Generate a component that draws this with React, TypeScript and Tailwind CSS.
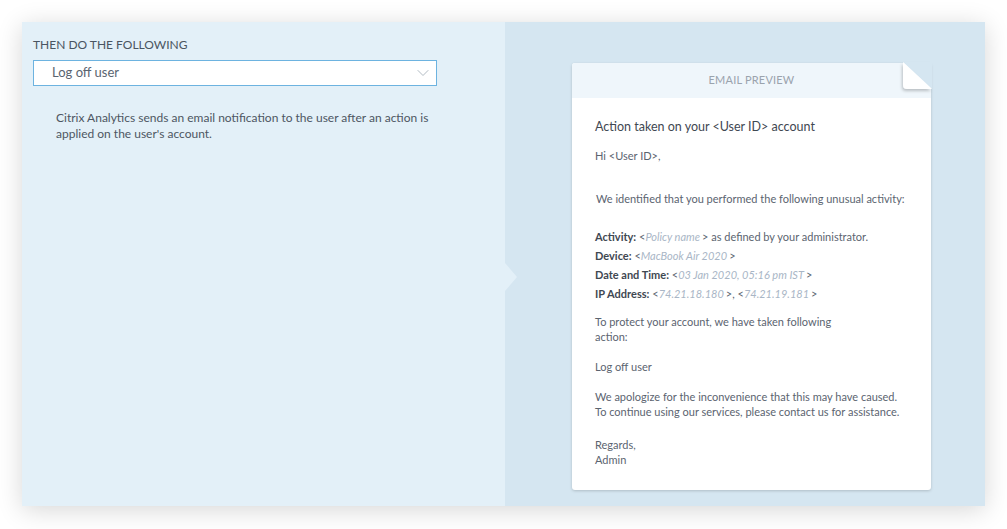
import { ChevronDown } from 'lucide-react'

const font = { fontFamily: 'Lato, "Open Sans", sans-serif' }

function Ph({ children }: { children: string }) {
  return (
    <>
      &lt;<i className="text-[#a9b6c6] pr-[2px]">{children}</i>&gt;
    </>
  )
}

function EmailPreview() {
  return (
    <div className="relative ml-[67px] mt-[41px] w-[359px] h-[427px] bg-white rounded-[3px] shadow-[0_1px_3px_rgba(0,0,0,0.18)]">
      <div className="h-[35px] bg-[#eff6fb] rounded-t-[3px] flex items-center justify-center text-[11px] text-[#9aa3ad] tracking-[0.2px]">
        EMAIL PREVIEW
      </div>

      {/* folded corner */}
      <svg className="absolute -top-px -right-px overflow-visible" width="29" height="27" viewBox="0 0 29 27">
        <defs>
          <filter id="fold" x="-50%" y="-50%" width="200%" height="200%">
            <feDropShadow dx="-1" dy="2" stdDeviation="1.5" floodColor="#000" floodOpacity="0.22" />
          </filter>
        </defs>
        <polygon points="0,0 29,0 29,27" fill="#d5e6f1" />
        <path d="M0 0 L29 27 L4 27 Q0 27 0 23 Z" fill="#ffffff" filter="url(#fold)" />
      </svg>

      <div className="px-[23px] pt-[20px] text-[11px] leading-[15px] text-[#5b6470]">
        <div className="text-[12.5px] leading-[18px] text-[#3f4852]">Action taken on your &lt;User ID&gt; account</div>
        <div className="mt-[12px]">Hi &lt;User ID&gt;,</div>
        <div className="mt-[28px] pl-px">We identified that you performed the following unusual activity:</div>

        <div className="mt-[21px] leading-[19px]">
          <div><b className="font-bold text-[#3f4852]">Activity:</b> <Ph>Policy name</Ph> as defined by your administrator.</div>
          <div><b className="font-bold text-[#3f4852]">Device:</b> <Ph>MacBook Air 2020</Ph></div>
          <div><b className="font-bold text-[#3f4852]">Date and Time:</b> <Ph>03 Jan 2020, 05:16 pm IST</Ph></div>
          <div><b className="font-bold text-[#3f4852]">IP Address:</b> <Ph>74.21.18.180</Ph>, <Ph>74.21.19.181</Ph></div>
        </div>

        <div className="mt-[11px]">To protect your account, we have taken following<br />action:</div>
        <div className="mt-[15px]">Log off user</div>
        <div className="mt-[15px]">
          We apologize for the inconvenience that this may have caused.<br />
          To continue using our services, please contact us for assistance.
        </div>
        <div className="mt-[18px]">Regards,<br />Admin</div>
      </div>
    </div>
  )
}

export default function App() {
  return (
    <div className="w-[1007px] h-[529px] bg-white pt-[22px] pl-[22px]" style={font}>
      <div className="flex w-[963px] h-[484px] shadow-[0_4px_24px_rgba(0,0,0,0.16)]">
        <div className="w-[483px] bg-[#e3f0f8] pl-[11px] pt-[16px]">
          <div className="text-[12px] leading-[14px] text-[#4a5561]">THEN DO THE FOLLOWING</div>
          <div className="mt-[8px] w-[404px] h-[26px] bg-white border border-[#6db3e0] flex items-center justify-between pl-[18px] pr-[3px]">
            <span className="text-[13px] text-[#5a6470]">Log off user</span>
            <ChevronDown size={20} strokeWidth={1.1} className="text-[#aab3bd]" />
          </div>
          <div className="mt-[24px] ml-[23px] w-[380px] text-[12px] leading-[16px] text-[#4d5662]">
            Citrix Analytics sends an email notification to the user after an action is applied on the user's account.
          </div>
        </div>
        <div className="relative flex-1 bg-[#d5e6f1]">
          <svg className="absolute left-0 top-[241px]" width="12" height="28" viewBox="0 0 12 28">
            <polygon points="0,0 12,14 0,28" fill="#e3f0f8" />
          </svg>
          <div className="flex">
            <EmailPreview />
          </div>
        </div>
      </div>
    </div>
  )
}
